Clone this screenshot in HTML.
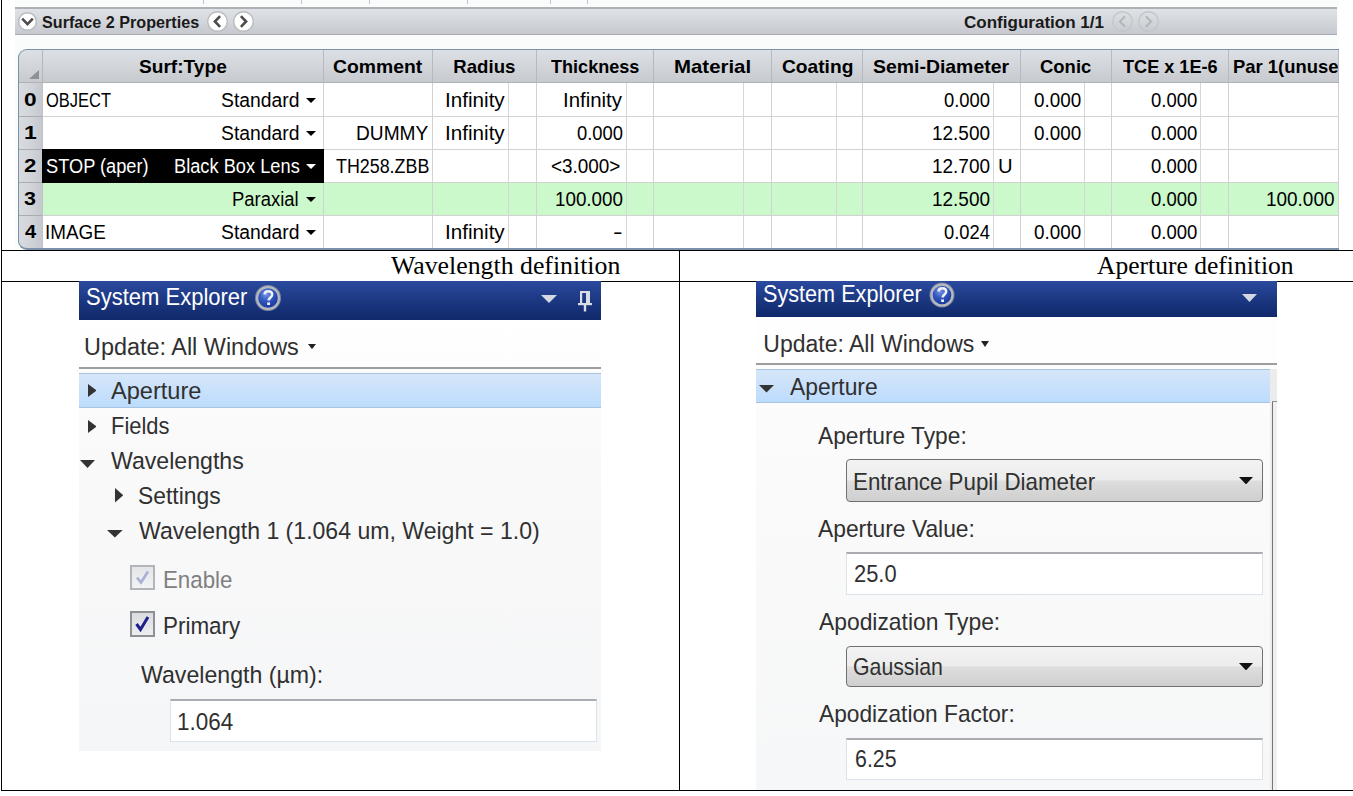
<!DOCTYPE html>
<html><head><meta charset="utf-8"><style>
html,body{margin:0;padding:0;background:#fff;width:1353px;height:796px;overflow:hidden;position:relative}
div{position:absolute}
.t{white-space:nowrap}
</style></head><body>
<div style="left:15.00px;top:0.00px;width:1324px;height:249px;background:#fafbfb"></div>
<div style="left:203.00px;top:0.00px;width:1px;height:4px;background:#b9c6d6"></div>
<div style="left:301.00px;top:0.00px;width:1px;height:4px;background:#b9c6d6"></div>
<div style="left:369.00px;top:0.00px;width:1px;height:4px;background:#b9c6d6"></div>
<div style="left:467.00px;top:0.00px;width:1px;height:4px;background:#b9c6d6"></div>
<div style="left:550.00px;top:0.00px;width:1px;height:4px;background:#b9c6d6"></div>
<div style="left:587.00px;top:0.00px;width:1px;height:4px;background:#b9c6d6"></div>
<div style="left:15.00px;top:7.00px;width:1322px;height:28px;background:linear-gradient(#dfe2e6,#d3d6db 50%,#c5c9cf);border-top:2px solid #adb0b5;border-bottom:1px solid #a8abb1;box-sizing:border-box"></div>
<svg style="position:absolute;left:16.5px;top:10.5px" width="21" height="21" viewBox="-10.5 -10.5 21 21"><circle cx="0" cy="0" r="8.8" fill="#ffffff" stroke="#b9bbbe" stroke-width="1.4"/><path d="M-5.3,-2.8 L0,2.6 L5.3,-2.8" fill="none" stroke="#4d4d4d" stroke-width="2.6"/></svg>
<svg style="position:absolute;left:205.5px;top:9.5px" width="23" height="23" viewBox="-11.5 -11.5 23 23"><circle cx="0" cy="0" r="9.8" fill="#ffffff" stroke="#b9bbbe" stroke-width="1.4"/><path d="M2.6,-5.3 L-2.6,0 L2.6,5.3" fill="none" stroke="#4d4d4d" stroke-width="2.6"/></svg>
<svg style="position:absolute;left:232.0px;top:9.5px" width="23" height="23" viewBox="-11.5 -11.5 23 23"><circle cx="0" cy="0" r="9.8" fill="#ffffff" stroke="#b9bbbe" stroke-width="1.4"/><path d="M-2.6,-5.3 L2.6,0 L-2.6,5.3" fill="none" stroke="#4d4d4d" stroke-width="2.6"/></svg>
<svg style="position:absolute;left:1110.5px;top:9.5px" width="23" height="23" viewBox="-11.5 -11.5 23 23"><circle cx="0" cy="0" r="9.8" fill="none" stroke="#c4c6c9" stroke-width="1.4"/><path d="M2.6,-5.3 L-2.6,0 L2.6,5.3" fill="none" stroke="#b3b5b8" stroke-width="2.0"/></svg>
<svg style="position:absolute;left:1136.5px;top:9.5px" width="23" height="23" viewBox="-11.5 -11.5 23 23"><circle cx="0" cy="0" r="9.8" fill="none" stroke="#c4c6c9" stroke-width="1.4"/><path d="M-2.6,-5.3 L2.6,0 L-2.6,5.3" fill="none" stroke="#b3b5b8" stroke-width="2.0"/></svg>
<div class="t" style="left:42.41px;top:13.73px;font:bold 16.5px/16.5px 'Liberation Sans', sans-serif;color:#1a1a1a;transform:scaleX(0.9790);transform-origin:0 0;">Surface 2 Properties</div>
<div class="t" style="left:964.16px;top:13.73px;font:bold 16.5px/16.5px 'Liberation Sans', sans-serif;color:#1a1a1a;transform:scaleX(1.0318);transform-origin:0 0;">Configuration 1/1</div>
<div style="left:18px;top:49px;width:1321px;height:200px;overflow:hidden;border-radius:9px 0 0 9px;background:#fff">
<div style="left:0.00px;top:0.00px;width:1321px;height:34px;background:linear-gradient(#dde0e4,#d2d5da 50%,#c6cacf)"></div>
<div style="left:0.00px;top:33.00px;width:1321px;height:1px;background:#aeb1b6"></div>
<div style="left:0.00px;top:34.00px;width:25px;height:166px;background:linear-gradient(90deg,#d9dce0,#cfd2d7 60%,#c3c7cd)"></div>
<div style="left:25.00px;top:133.00px;width:1295px;height:34px;background:#ccf9cc"></div>
<div style="left:25.00px;top:67.00px;width:1295px;height:1px;background:#d2d2d2"></div>
<div style="left:0.00px;top:67.00px;width:25px;height:1px;background:#a9adb2"></div>
<div style="left:25.00px;top:100.00px;width:1295px;height:1px;background:#d2d2d2"></div>
<div style="left:0.00px;top:100.00px;width:25px;height:1px;background:#a9adb2"></div>
<div style="left:25.00px;top:133.00px;width:1295px;height:1px;background:#d2d2d2"></div>
<div style="left:0.00px;top:133.00px;width:25px;height:1px;background:#a9adb2"></div>
<div style="left:25.00px;top:166.00px;width:1295px;height:1px;background:#d2d2d2"></div>
<div style="left:0.00px;top:166.00px;width:25px;height:1px;background:#a9adb2"></div>
<div style="left:305.00px;top:0.00px;width:1px;height:33px;background:#b6babf"></div>
<div style="left:305.00px;top:34.00px;width:1px;height:166px;background:#d2d2d2"></div>
<div style="left:414.00px;top:0.00px;width:1px;height:33px;background:#b6babf"></div>
<div style="left:414.00px;top:34.00px;width:1px;height:166px;background:#d2d2d2"></div>
<div style="left:518.00px;top:0.00px;width:1px;height:33px;background:#b6babf"></div>
<div style="left:518.00px;top:34.00px;width:1px;height:166px;background:#d2d2d2"></div>
<div style="left:635.00px;top:0.00px;width:1px;height:33px;background:#b6babf"></div>
<div style="left:635.00px;top:34.00px;width:1px;height:166px;background:#d2d2d2"></div>
<div style="left:753.00px;top:0.00px;width:1px;height:33px;background:#b6babf"></div>
<div style="left:753.00px;top:34.00px;width:1px;height:166px;background:#d2d2d2"></div>
<div style="left:844.00px;top:0.00px;width:1px;height:33px;background:#b6babf"></div>
<div style="left:844.00px;top:34.00px;width:1px;height:166px;background:#d2d2d2"></div>
<div style="left:1002.00px;top:0.00px;width:1px;height:33px;background:#b6babf"></div>
<div style="left:1002.00px;top:34.00px;width:1px;height:166px;background:#d2d2d2"></div>
<div style="left:1093.00px;top:0.00px;width:1px;height:33px;background:#b6babf"></div>
<div style="left:1093.00px;top:34.00px;width:1px;height:166px;background:#d2d2d2"></div>
<div style="left:1210.00px;top:0.00px;width:1px;height:33px;background:#b6babf"></div>
<div style="left:1210.00px;top:34.00px;width:1px;height:166px;background:#d2d2d2"></div>
<div style="left:1320.00px;top:0.00px;width:1px;height:33px;background:#b6babf"></div>
<div style="left:1320.00px;top:34.00px;width:1px;height:166px;background:#d2d2d2"></div>
<div style="left:24.00px;top:0.00px;width:1px;height:33px;background:#b3b7bc"></div>
<div style="left:24.00px;top:34.00px;width:1px;height:166px;background:#bfc3c8"></div>
<div style="left:490.00px;top:34.00px;width:1px;height:166px;background:#d6d6d6"></div>
<div style="left:608.00px;top:34.00px;width:1px;height:166px;background:#d6d6d6"></div>
<div style="left:725.00px;top:34.00px;width:1px;height:166px;background:#d6d6d6"></div>
<div style="left:818.00px;top:34.00px;width:1px;height:166px;background:#d6d6d6"></div>
<div style="left:975.00px;top:34.00px;width:1px;height:166px;background:#d6d6d6"></div>
<div style="left:1066.00px;top:34.00px;width:1px;height:166px;background:#d6d6d6"></div>
<div style="left:1182.00px;top:34.00px;width:1px;height:166px;background:#d6d6d6"></div>
<div style="left:24.00px;top:100.00px;width:282px;height:34px;background:#000"></div>
<svg style="position:absolute;left:11px;top:21px" width="10" height="9" viewBox="0 0 10 9"><polygon points="10,0 10,9 0,9" fill="#8e9196"/></svg>
</div>
<div style="left:18.00px;top:49.00px;width:1321px;height:201px;border:1px solid #7a91a9;border-right:none;border-bottom:2px solid #7a91a9;border-radius:9px 0 0 9px;box-sizing:border-box"></div>
<div class="t" style="left:139.49px;top:57.86px;font:bold 18.6px/18.6px 'Liberation Sans', sans-serif;color:#000;transform:scaleX(1.0276);transform-origin:0 0;">Surf:Type</div>
<div class="t" style="left:333.22px;top:57.86px;font:bold 18.6px/18.6px 'Liberation Sans', sans-serif;color:#000;transform:scaleX(1.0404);transform-origin:0 0;">Comment</div>
<div class="t" style="left:453.35px;top:57.86px;font:bold 18.6px/18.6px 'Liberation Sans', sans-serif;color:#000;">Radius</div>
<div class="t" style="left:550.56px;top:57.86px;font:bold 18.6px/18.6px 'Liberation Sans', sans-serif;color:#000;transform:scaleX(0.9720);transform-origin:0 0;">Thickness</div>
<div class="t" style="left:673.63px;top:57.86px;font:bold 18.6px/18.6px 'Liberation Sans', sans-serif;color:#000;transform:scaleX(1.0976);transform-origin:0 0;">Material</div>
<div class="t" style="left:781.73px;top:57.86px;font:bold 18.6px/18.6px 'Liberation Sans', sans-serif;color:#000;transform:scaleX(1.0315);transform-origin:0 0;">Coating</div>
<div class="t" style="left:873.08px;top:57.86px;font:bold 18.6px/18.6px 'Liberation Sans', sans-serif;color:#000;transform:scaleX(1.0446);transform-origin:0 0;">Semi-Diameter</div>
<div class="t" style="left:1040.26px;top:57.86px;font:bold 18.6px/18.6px 'Liberation Sans', sans-serif;color:#000;transform:scaleX(0.9926);transform-origin:0 0;">Conic</div>
<div class="t" style="left:1122.76px;top:57.86px;font:bold 18.6px/18.6px 'Liberation Sans', sans-serif;color:#000;transform:scaleX(0.9741);transform-origin:0 0;">TCE x 1E-6</div>
<div style="left:1229px;top:50px;width:109px;height:32px;overflow:hidden">
<div class="t" style="left:3.76px;top:7.86px;font:bold 18.6px/18.6px 'Liberation Sans', sans-serif;color:#000;transform:scaleX(0.9900);transform-origin:0 0;">Par 1(unused)</div>
</div>
<div class="t" style="left:23.99px;top:90.96px;font:bold 18.6px/18.6px 'Liberation Sans', sans-serif;color:#000;transform:scaleX(1.2169);transform-origin:0 0;">0</div>
<div class="t" style="left:23.51px;top:124.16px;font:bold 18.6px/18.6px 'Liberation Sans', sans-serif;color:#000;transform:scaleX(1.2343);transform-origin:0 0;">1</div>
<div class="t" style="left:24.15px;top:157.26px;font:bold 18.6px/18.6px 'Liberation Sans', sans-serif;color:#000;transform:scaleX(1.2000);transform-origin:0 0;">2</div>
<div class="t" style="left:24.47px;top:190.36px;font:bold 18.6px/18.6px 'Liberation Sans', sans-serif;color:#000;transform:scaleX(1.1520);transform-origin:0 0;">3</div>
<div class="t" style="left:24.63px;top:223.36px;font:bold 18.6px/18.6px 'Liberation Sans', sans-serif;color:#000;transform:scaleX(1.0800);transform-origin:0 0;">4</div>
<div class="t" style="left:46.28px;top:89.77px;font:20px/20px 'Liberation Sans', sans-serif;color:#000;transform:scaleX(0.8232);transform-origin:0 0;">OBJECT</div>
<div class="t" style="left:221.05px;top:89.77px;font:20px/20px 'Liberation Sans', sans-serif;color:#000;transform:scaleX(0.9658);transform-origin:0 0;">Standard</div>
<svg style="position:absolute;left:306px;top:97.5px" width="10" height="5.0" viewBox="0 0 10 5.0"><polygon points="0,0 10,0 5.0,5.0" fill="#000"/></svg>
<div class="t" style="left:221.05px;top:122.97px;font:20px/20px 'Liberation Sans', sans-serif;color:#000;transform:scaleX(0.9658);transform-origin:0 0;">Standard</div>
<svg style="position:absolute;left:306px;top:130.70000000000002px" width="10" height="5.0" viewBox="0 0 10 5.0"><polygon points="0,0 10,0 5.0,5.0" fill="#000"/></svg>
<div class="t" style="left:221.05px;top:222.17px;font:20px/20px 'Liberation Sans', sans-serif;color:#000;transform:scaleX(0.9658);transform-origin:0 0;">Standard</div>
<svg style="position:absolute;left:306px;top:229.9px" width="10" height="5.0" viewBox="0 0 10 5.0"><polygon points="0,0 10,0 5.0,5.0" fill="#000"/></svg>
<div class="t" style="left:445.06px;top:89.77px;font:20px/20px 'Liberation Sans', sans-serif;color:#000;transform:scaleX(1.0327);transform-origin:0 0;">Infinity</div>
<div class="t" style="left:563.09px;top:89.77px;font:20px/20px 'Liberation Sans', sans-serif;color:#000;transform:scaleX(1.0201);transform-origin:0 0;">Infinity</div>
<div class="t" style="left:943.71px;top:89.77px;font:20px/20px 'Liberation Sans', sans-serif;color:#000;transform:scaleX(0.9196);transform-origin:0 0;">0.000</div>
<div class="t" style="left:1034.29px;top:89.77px;font:20px/20px 'Liberation Sans', sans-serif;color:#000;transform:scaleX(0.9423);transform-origin:0 0;">0.000</div>
<div class="t" style="left:1151.11px;top:89.77px;font:20px/20px 'Liberation Sans', sans-serif;color:#000;transform:scaleX(0.9237);transform-origin:0 0;">0.000</div>
<div class="t" style="left:1151.11px;top:122.97px;font:20px/20px 'Liberation Sans', sans-serif;color:#000;transform:scaleX(0.9237);transform-origin:0 0;">0.000</div>
<div class="t" style="left:1151.11px;top:156.07px;font:20px/20px 'Liberation Sans', sans-serif;color:#000;transform:scaleX(0.9237);transform-origin:0 0;">0.000</div>
<div class="t" style="left:1151.11px;top:189.17px;font:20px/20px 'Liberation Sans', sans-serif;color:#000;transform:scaleX(0.9237);transform-origin:0 0;">0.000</div>
<div class="t" style="left:1151.11px;top:222.17px;font:20px/20px 'Liberation Sans', sans-serif;color:#000;transform:scaleX(0.9237);transform-origin:0 0;">0.000</div>
<div class="t" style="left:356.15px;top:122.97px;font:20px/20px 'Liberation Sans', sans-serif;color:#000;transform:scaleX(0.9565);transform-origin:0 0;">DUMMY</div>
<div class="t" style="left:445.06px;top:122.97px;font:20px/20px 'Liberation Sans', sans-serif;color:#000;transform:scaleX(1.0327);transform-origin:0 0;">Infinity</div>
<div class="t" style="left:576.81px;top:122.97px;font:20px/20px 'Liberation Sans', sans-serif;color:#000;transform:scaleX(0.9175);transform-origin:0 0;">0.000</div>
<div class="t" style="left:931.78px;top:122.97px;font:20px/20px 'Liberation Sans', sans-serif;color:#000;transform:scaleX(0.9478);transform-origin:0 0;">12.500</div>
<div class="t" style="left:1034.29px;top:122.97px;font:20px/20px 'Liberation Sans', sans-serif;color:#000;transform:scaleX(0.9423);transform-origin:0 0;">0.000</div>
<div class="t" style="left:46.20px;top:156.07px;font:20px/20px 'Liberation Sans', sans-serif;color:#fff;transform:scaleX(0.9113);transform-origin:0 0;">STOP (aper)</div>
<div class="t" style="left:173.52px;top:156.07px;font:20px/20px 'Liberation Sans', sans-serif;color:#fff;transform:scaleX(0.9122);transform-origin:0 0;">Black Box Lens</div>
<svg style="position:absolute;left:306px;top:163.8px" width="10" height="5.0" viewBox="0 0 10 5.0"><polygon points="0,0 10,0 5.0,5.0" fill="#fff"/></svg>
<div class="t" style="left:335.67px;top:156.07px;font:20px/20px 'Liberation Sans', sans-serif;color:#000;transform:scaleX(0.8932);transform-origin:0 0;">TH258.ZBB</div>
<div class="t" style="left:551.45px;top:156.07px;font:20px/20px 'Liberation Sans', sans-serif;color:#000;transform:scaleX(0.9455);transform-origin:0 0;">&lt;3.000&gt;</div>
<div class="t" style="left:931.78px;top:156.07px;font:20px/20px 'Liberation Sans', sans-serif;color:#000;transform:scaleX(0.9478);transform-origin:0 0;">12.700</div>
<div class="t" style="left:998.48px;top:156.07px;font:20px/20px 'Liberation Sans', sans-serif;color:#000;transform:scaleX(1.0110);transform-origin:0 0;">U</div>
<div class="t" style="left:232.40px;top:189.17px;font:20px/20px 'Liberation Sans', sans-serif;color:#000;transform:scaleX(0.9225);transform-origin:0 0;">Paraxial</div>
<svg style="position:absolute;left:306px;top:196.9px" width="10" height="5.0" viewBox="0 0 10 5.0"><polygon points="0,0 10,0 5.0,5.0" fill="#000"/></svg>
<div class="t" style="left:554.79px;top:189.17px;font:20px/20px 'Liberation Sans', sans-serif;color:#000;transform:scaleX(0.9400);transform-origin:0 0;">100.000</div>
<div class="t" style="left:931.78px;top:189.17px;font:20px/20px 'Liberation Sans', sans-serif;color:#000;transform:scaleX(0.9478);transform-origin:0 0;">12.500</div>
<div class="t" style="left:1266.28px;top:189.17px;font:20px/20px 'Liberation Sans', sans-serif;color:#000;transform:scaleX(0.9471);transform-origin:0 0;">100.000</div>
<div class="t" style="left:44.63px;top:222.17px;font:20px/20px 'Liberation Sans', sans-serif;color:#000;transform:scaleX(0.9425);transform-origin:0 0;">IMAGE</div>
<div class="t" style="left:445.06px;top:222.17px;font:20px/20px 'Liberation Sans', sans-serif;color:#000;transform:scaleX(1.0327);transform-origin:0 0;">Infinity</div>
<div class="t" style="left:613.24px;top:222.17px;font:20px/20px 'Liberation Sans', sans-serif;color:#000;transform:scaleX(1.4359);transform-origin:0 0;">-</div>
<div class="t" style="left:943.71px;top:222.17px;font:20px/20px 'Liberation Sans', sans-serif;color:#000;transform:scaleX(0.9172);transform-origin:0 0;">0.024</div>
<div class="t" style="left:1034.29px;top:222.17px;font:20px/20px 'Liberation Sans', sans-serif;color:#000;transform:scaleX(0.9423);transform-origin:0 0;">0.000</div>
<div style="left:1.00px;top:0.00px;width:1px;height:791px;background:#000"></div>
<div style="left:1.00px;top:250.00px;width:1352px;height:1px;background:#000"></div>
<div style="left:1.00px;top:281.00px;width:1352px;height:1px;background:#000"></div>
<div style="left:1.00px;top:790.00px;width:1352px;height:1px;background:#000"></div>
<div style="left:679.00px;top:250.00px;width:1px;height:540px;background:#000"></div>
<div class="t" style="left:390.60px;top:253.36px;font:25px/25px 'Liberation Serif', serif;color:#000;transform:scaleX(1.0317);transform-origin:0 0;">Wavelength definition</div>
<div class="t" style="left:1096.74px;top:252.66px;font:25px/25px 'Liberation Serif', serif;color:#000;transform:scaleX(1.0223);transform-origin:0 0;">Aperture definition</div>
<div style="left:79.00px;top:281.00px;width:522px;height:470px;background:linear-gradient(#fefefe,#f9f9fa 40%,#f5f6f7)"></div>
<div style="left:79.00px;top:281.00px;width:522px;height:39px;background:linear-gradient(#2b4a9f,#1c3882 50%,#10286b)"></div>
<div class="t" style="left:85.59px;top:284.76px;font:24.5px/24.5px 'Liberation Sans', sans-serif;color:#fff;transform:scaleX(0.8982);transform-origin:0 0;">System Explorer</div>
<svg style="position:absolute;left:254px;top:283.5px" width="28" height="28" viewBox="-14 -14 28 28">
<defs><radialGradient id="hg268" cx="0.4" cy="0.3" r="0.75"><stop offset="0" stop-color="#7a98e6"/><stop offset="0.45" stop-color="#3358c2"/><stop offset="1" stop-color="#17379a"/></radialGradient></defs>
<circle r="13.0" fill="#8f97aa" opacity="0.85"/><circle r="12.0" fill="#b5b8bd"/><circle r="9.8" fill="url(#hg268)"/>
<path d="M-3.4,-3.6 C-3.4,-7.6 4.2,-7.8 4.2,-3.4 C4.2,-0.6 0.6,-0.4 0.6,2.6" fill="none" stroke="#eef0f6" stroke-width="2.5"/><rect x="-0.8" y="4.4" width="2.8" height="2.6" fill="#eef0f6"/></svg>
<svg style="position:absolute;left:541px;top:295px" width="16" height="8" viewBox="0 0 16 8"><polygon points="0,0 16,0 8.0,8" fill="#d3d8e3"/></svg>
<svg style="position:absolute;left:577px;top:290px" width="16" height="22" viewBox="0 0 16 22"><path d="M3,1 H13 V13 H3 Z M5.2,3 V13 H9 V3 Z" fill="#d9dde7" fill-rule="evenodd"/><rect x="1" y="13" width="14" height="2.2" fill="#d9dde7"/><rect x="6.8" y="15" width="2.4" height="6.5" fill="#d9dde7"/></svg>
<div style="left:79.00px;top:320.00px;width:522px;height:48px;background:linear-gradient(#ffffff,#fdfdfd)"></div>
<div class="t" style="left:84.46px;top:335.51px;font:23.5px/23.5px 'Liberation Sans', sans-serif;color:#303030;transform:scaleX(0.9968);transform-origin:0 0;">Update: All Windows</div>
<svg style="position:absolute;left:308px;top:344.3px" width="8" height="5.199999999999989" viewBox="0 0 8 5.199999999999989"><polygon points="0,0 8,0 4.0,5.199999999999989" fill="#222"/></svg>
<div style="left:79.00px;top:367.00px;width:522px;height:2px;background:#9e9e9e"></div>
<div style="left:79.00px;top:373.00px;width:522px;height:35px;background:linear-gradient(#d6e6f9,#bcdcfd);border-top:1px solid #a8c4e2;border-bottom:1px solid #a8c4e2;box-sizing:border-box"></div>
<div class="t" style="left:110.90px;top:378.76px;font:24.5px/24.5px 'Liberation Sans', sans-serif;color:#303030;transform:scaleX(0.9626);transform-origin:0 0;">Aperture</div>
<svg style="position:absolute;left:87.5px;top:384px" width="8.700000000000003" height="13" viewBox="0 0 8.700000000000003 13"><polygon points="0,0 8.700000000000003,6.5 0,13" fill="#333"/></svg>
<div class="t" style="left:111.11px;top:413.76px;font:24.5px/24.5px 'Liberation Sans', sans-serif;color:#303030;transform:scaleX(0.8944);transform-origin:0 0;">Fields</div>
<svg style="position:absolute;left:87.5px;top:419.5px" width="8.700000000000003" height="13.0" viewBox="0 0 8.700000000000003 13.0"><polygon points="0,0 8.700000000000003,6.5 0,13.0" fill="#333"/></svg>
<div class="t" style="left:110.88px;top:449.26px;font:24.5px/24.5px 'Liberation Sans', sans-serif;color:#303030;transform:scaleX(0.9431);transform-origin:0 0;">Wavelengths</div>
<svg style="position:absolute;left:80px;top:459.5px" width="15" height="8.0" viewBox="0 0 15 8.0"><polygon points="0,0 15,0 7.5,8.0" fill="#333"/></svg>
<div class="t" style="left:137.95px;top:483.96px;font:24.5px/24.5px 'Liberation Sans', sans-serif;color:#303030;transform:scaleX(0.9329);transform-origin:0 0;">Settings</div>
<svg style="position:absolute;left:115px;top:488px" width="8.200000000000003" height="14.5" viewBox="0 0 8.200000000000003 14.5"><polygon points="0,0 8.200000000000003,7.25 0,14.5" fill="#333"/></svg>
<div class="t" style="left:138.78px;top:518.76px;font:24.5px/24.5px 'Liberation Sans', sans-serif;color:#303030;transform:scaleX(0.9416);transform-origin:0 0;">Wavelength 1 (1.064 um, Weight = 1.0)</div>
<svg style="position:absolute;left:107.3px;top:530px" width="15.700000000000003" height="7.5" viewBox="0 0 15.700000000000003 7.5"><polygon points="0,0 15.700000000000003,0 7.850000000000001,7.5" fill="#333"/></svg>
<div style="left:130.00px;top:565.00px;width:25px;height:25px;background:linear-gradient(#e4e5e8,#f2f3f5);border:2px solid #b4b5b8;box-sizing:border-box"></div>
<svg style="position:absolute;left:130px;top:565px" width="25" height="25" viewBox="0 0 25 25"><path d="M7,12.5 L11,17.5 L18,6.5" fill="none" stroke="#a8b0d6" stroke-width="2.6"/></svg>
<div class="t" style="left:162.98px;top:567.56px;font:24.5px/24.5px 'Liberation Sans', sans-serif;color:#808080;transform:scaleX(0.9094);transform-origin:0 0;">Enable</div>
<div style="left:130.00px;top:611.00px;width:25px;height:26px;background:linear-gradient(#d9dbe0,#eceef1);border:2px solid #8f9093;box-sizing:border-box"></div>
<svg style="position:absolute;left:130px;top:611px" width="25" height="26" viewBox="0 0 25 26"><path d="M6.5,13 L10.5,18.5 L18,6" fill="none" stroke="#1f1f8a" stroke-width="3"/></svg>
<div class="t" style="left:162.97px;top:614.36px;font:24.5px/24.5px 'Liberation Sans', sans-serif;color:#303030;transform:scaleX(0.9153);transform-origin:0 0;">Primary</div>
<div class="t" style="left:140.88px;top:662.86px;font:24.5px/24.5px 'Liberation Sans', sans-serif;color:#303030;transform:scaleX(0.9443);transform-origin:0 0;">Wavelength (µm):</div>
<div style="left:170.00px;top:699.00px;width:427px;height:43px;background:#fff;border:1px solid #dce2e9;border-top:2px solid #abacb1;box-sizing:border-box"></div>
<div class="t" style="left:177.48px;top:709.86px;font:24.5px/24.5px 'Liberation Sans', sans-serif;color:#303030;transform:scaleX(0.9160);transform-origin:0 0;">1.064</div>
<div style="left:756.00px;top:281.00px;width:521px;height:509px;background:linear-gradient(#fefefe,#fafafa 40%,#f6f7f8)"></div>
<div style="left:756.00px;top:281.00px;width:521px;height:36px;background:linear-gradient(#2b4a9f,#1c3882 50%,#10286b)"></div>
<div class="t" style="left:763.49px;top:282.18px;font:24px/24px 'Liberation Sans', sans-serif;color:#fff;transform:scaleX(0.9014);transform-origin:0 0;">System Explorer</div>
<svg style="position:absolute;left:928px;top:281px" width="28" height="28" viewBox="-14 -14 28 28">
<defs><radialGradient id="hg942" cx="0.4" cy="0.3" r="0.75"><stop offset="0" stop-color="#7a98e6"/><stop offset="0.45" stop-color="#3358c2"/><stop offset="1" stop-color="#17379a"/></radialGradient></defs>
<circle r="12.5" fill="#8f97aa" opacity="0.85"/><circle r="11.5" fill="#b5b8bd"/><circle r="9.3" fill="url(#hg942)"/>
<path d="M-3.4,-3.6 C-3.4,-7.6 4.2,-7.8 4.2,-3.4 C4.2,-0.6 0.6,-0.4 0.6,2.6" fill="none" stroke="#eef0f6" stroke-width="2.5"/><rect x="-0.8" y="4.4" width="2.8" height="2.6" fill="#eef0f6"/></svg>
<svg style="position:absolute;left:1241.5px;top:293.5px" width="15.0" height="8.0" viewBox="0 0 15.0 8.0"><polygon points="0,0 15.0,0 7.5,8.0" fill="#d3d8e3"/></svg>
<div style="left:756.00px;top:317.00px;width:521px;height:47px;background:#fefefe"></div>
<div class="t" style="left:763.35px;top:332.53px;font:23px/23px 'Liberation Sans', sans-serif;color:#303030;">Update: All Windows</div>
<svg style="position:absolute;left:981px;top:340.5px" width="8" height="6.0" viewBox="0 0 8 6.0"><polygon points="0,0 8,0 4.0,6.0" fill="#222"/></svg>
<div style="left:756.00px;top:363.00px;width:521px;height:2px;background:#9e9e9e"></div>
<div style="left:756.00px;top:369.00px;width:514px;height:34px;background:linear-gradient(#d6e6f9,#bcdcfd);border-top:1px solid #a8c4e2;border-bottom:1px solid #a8c4e2;box-sizing:border-box"></div>
<div style="left:1270.00px;top:369.00px;width:7px;height:421px;background:#ececec"></div>
<div style="left:1272.00px;top:401.00px;width:1.5px;height:389px;background:#767676"></div>
<div style="left:1272.00px;top:401.00px;width:5px;height:1px;background:#909090"></div>
<div style="left:1273.00px;top:402.00px;width:4px;height:388px;background:#f0f0f0"></div>
<div class="t" style="left:789.60px;top:374.58px;font:24px/24px 'Liberation Sans', sans-serif;color:#303030;transform:scaleX(0.9527);transform-origin:0 0;">Aperture</div>
<svg style="position:absolute;left:759px;top:385.3px" width="15" height="7.599999999999966" viewBox="0 0 15 7.599999999999966"><polygon points="0,0 15,0 7.5,7.599999999999966" fill="#333"/></svg>
<div class="t" style="left:818.20px;top:424.08px;font:24px/24px 'Liberation Sans', sans-serif;color:#303030;transform:scaleX(0.9472);transform-origin:0 0;">Aperture Type:</div>
<div style="left:846.00px;top:459.00px;width:417px;height:43px;background:linear-gradient(#f3f3f3,#ececec 48%,#dddddd 52%,#cfcfcf);border:1.5px solid #707070;border-radius:4px;box-sizing:border-box"></div>
<div class="t" style="left:852.54px;top:469.88px;font:24px/24px 'Liberation Sans', sans-serif;color:#303030;transform:scaleX(0.9307);transform-origin:0 0;">Entrance Pupil Diameter</div>
<svg style="position:absolute;left:1239px;top:476.9px" width="14" height="7.400000000000034" viewBox="0 0 14 7.400000000000034"><polygon points="0,0 14,0 7.0,7.400000000000034" fill="#111"/></svg>
<div class="t" style="left:818.00px;top:516.68px;font:24px/24px 'Liberation Sans', sans-serif;color:#303030;transform:scaleX(0.9510);transform-origin:0 0;">Aperture Value:</div>
<div style="left:846.00px;top:552.00px;width:417px;height:43px;background:#fff;border:1px solid #dce2e9;border-top:2px solid #abacb1;box-sizing:border-box"></div>
<div class="t" style="left:854.46px;top:561.58px;font:24px/24px 'Liberation Sans', sans-serif;color:#303030;transform:scaleX(0.9124);transform-origin:0 0;">25.0</div>
<div class="t" style="left:818.50px;top:609.58px;font:24px/24px 'Liberation Sans', sans-serif;color:#303030;transform:scaleX(0.9519);transform-origin:0 0;">Apodization Type:</div>
<div style="left:846.00px;top:646.00px;width:417px;height:41px;background:linear-gradient(#f3f3f3,#ececec 48%,#dddddd 52%,#cfcfcf);border:1.5px solid #707070;border-radius:4px;box-sizing:border-box"></div>
<div class="t" style="left:853.09px;top:655.08px;font:24px/24px 'Liberation Sans', sans-serif;color:#303030;transform:scaleX(0.8863);transform-origin:0 0;">Gaussian</div>
<svg style="position:absolute;left:1239px;top:662.9px" width="14" height="7.399999999999977" viewBox="0 0 14 7.399999999999977"><polygon points="0,0 14,0 7.0,7.399999999999977" fill="#111"/></svg>
<div class="t" style="left:818.50px;top:701.68px;font:24px/24px 'Liberation Sans', sans-serif;color:#303030;transform:scaleX(0.9466);transform-origin:0 0;">Apodization Factor:</div>
<div style="left:846.00px;top:738.00px;width:417px;height:42px;background:#fff;border:1px solid #dce2e9;border-top:2px solid #abacb1;box-sizing:border-box"></div>
<div class="t" style="left:854.89px;top:747.08px;font:24px/24px 'Liberation Sans', sans-serif;color:#303030;transform:scaleX(0.8899);transform-origin:0 0;">6.25</div>
<div style="left:1.00px;top:790.00px;width:1352px;height:1px;background:#000"></div>
</body></html>
